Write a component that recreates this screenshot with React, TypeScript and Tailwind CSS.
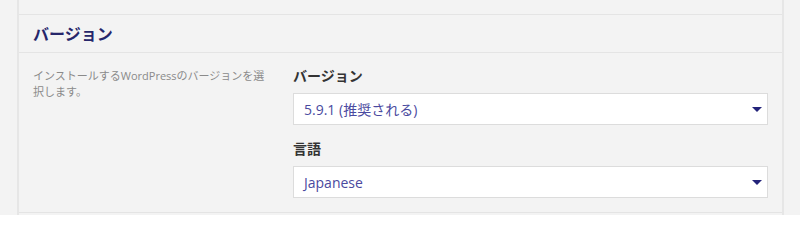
const font = "font-['Open_Sans','Noto_Sans_CJK_JP',sans-serif]";

function Caret() {
  return (
    <svg width="10" height="5" viewBox="0 0 10 5" className="shrink-0">
      <path d="M0 0 H10 L5 5 Z" fill="#23237a" />
    </svg>
  );
}

function SelectBox({ value }: { value: string }) {
  return (
    <div className="h-[32px] bg-white border border-[#dcdcdc] flex items-center justify-between pl-[10px] pr-[5px]">
      <span className="text-[14px] text-[#4a4aa0]">{value}</span>
      <Caret />
    </div>
  );
}

export default function App() {
  return (
    <div className={`${font} bg-[#f3f3f3] h-[215px] w-[800px] pl-[17px] pr-[16px] overflow-hidden`}>
      <div className="h-full border-x-2 border-[#e6e6e6] flex flex-col">
        <div className="h-[15px] shrink-0 border-b border-[#e4e4e4]" />
        <div className="h-[38px] shrink-0 border-b border-[#e4e4e4] flex items-center px-[14px]">
          <h2 className="text-[16px] font-bold text-[#26266a]">バージョン</h2>
        </div>
        <div className="h-[160px] shrink-0 border-b border-[#e4e4e4] flex px-[14px] pt-[12px]">
          <p className="w-[238px] mr-[22px] pt-[3px] text-[11px] leading-[16px] text-[#8a8a8a]">
            インストールするWordPressのバージョンを選択します。
          </p>
          <div className="flex-1 flex flex-col">
            <label className="text-[14px] font-bold text-[#333] leading-[22px] mb-[6px]">バージョン</label>
            <SelectBox value="5.9.1 (推奨される)" />
            <label className="text-[14px] font-bold text-[#333] leading-[22px] mt-[13px] mb-[6px]">言語</label>
            <SelectBox value="Japanese" />
          </div>
        </div>
      </div>
    </div>
  );
}
